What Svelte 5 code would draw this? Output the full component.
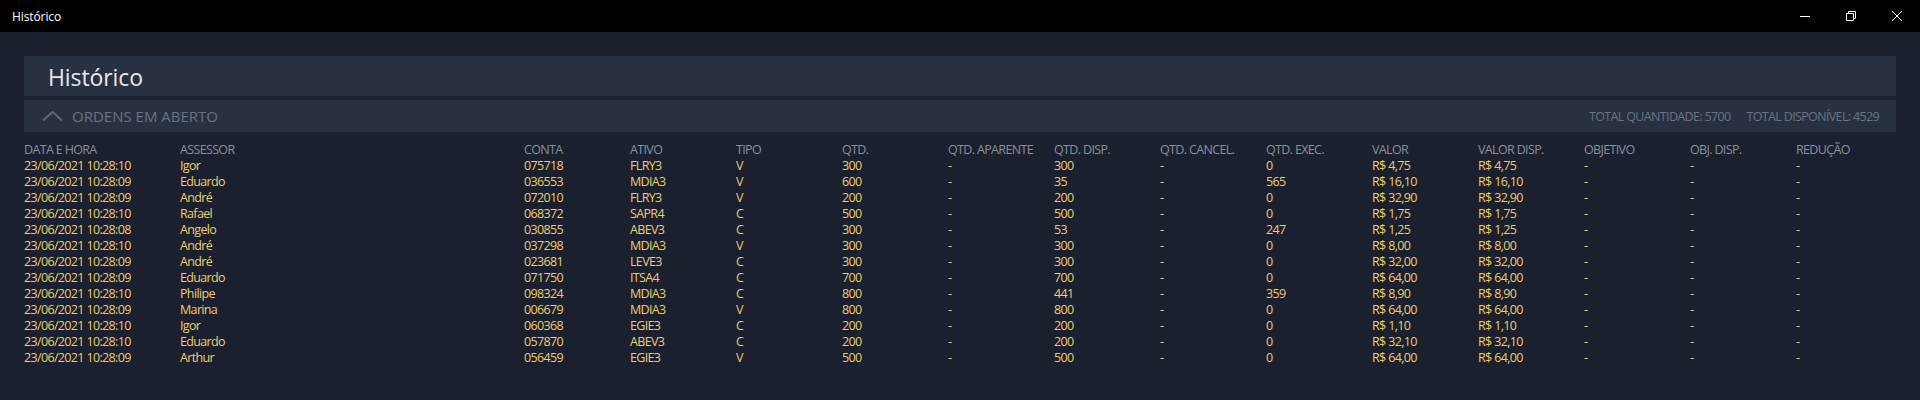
<script>
	const columns = ['DATA E HORA', 'ASSESSOR', 'CONTA', 'ATIVO', 'TIPO', 'QTD.', 'QTD. APARENTE', 'QTD. DISP.', 'QTD. CANCEL.', 'QTD. EXEC.', 'VALOR', 'VALOR DISP.', 'OBJETIVO', 'OBJ. DISP.', 'REDUÇÃO'];

	const orders = [
		['10', 'Igor', '075718', 'FLRY3', 'V', '300', '300', '0', '4,75'],
		['09', 'Eduardo', '036553', 'MDIA3', 'V', '600', '35', '565', '16,10'],
		['09', 'André', '072010', 'FLRY3', 'V', '200', '200', '0', '32,90'],
		['10', 'Rafael', '068372', 'SAPR4', 'C', '500', '500', '0', '1,75'],
		['08', 'Angelo', '030855', 'ABEV3', 'C', '300', '53', '247', '1,25'],
		['10', 'André', '037298', 'MDIA3', 'V', '300', '300', '0', '8,00'],
		['09', 'André', '023681', 'LEVE3', 'C', '300', '300', '0', '32,00'],
		['09', 'Eduardo', '071750', 'ITSA4', 'C', '700', '700', '0', '64,00'],
		['10', 'Philipe', '098324', 'MDIA3', 'C', '800', '441', '359', '8,90'],
		['09', 'Marina', '006679', 'MDIA3', 'V', '800', '800', '0', '64,00'],
		['10', 'Igor', '060368', 'EGIE3', 'C', '200', '200', '0', '1,10'],
		['10', 'Eduardo', '057870', 'ABEV3', 'C', '200', '200', '0', '32,10'],
		['09', 'Arthur', '056459', 'EGIE3', 'V', '500', '500', '0', '64,00']
	];

	function cells(o) {
		const price = 'R$ ' + o[8];
		return ['23/06/2021 10:28:' + o[0], o[1], o[2], o[3], o[4], o[5], '-', o[6], '-', o[7], price, price, '-', '-', '-'];
	}
</script>

<div class="window">
	<header class="titlebar">
		<span class="app_name">Histórico</span>
		<div class="controls">
			<svg width="46" height="32" viewBox="0 0 46 32"><path d="M18 16.5h10" stroke="#fff" fill="none" /></svg>
			<svg width="46" height="32" viewBox="0 0 46 32"><path d="M18.5 13.5h7v7h-7zM20.5 13.5v-2h7v7h-2" stroke="#fff" fill="none" /></svg>
			<svg width="46" height="32" viewBox="0 0 46 32"><path d="M18 11l10 10M28 11L18 21" stroke="#fff" fill="none" /></svg>
		</div>
	</header>

	<main>
		<h1 class="panel title">Histórico</h1>
		<section class="panel section">
			<svg class="chevron" width="20" height="12" viewBox="0 0 20 12"><path d="M1 10.5l9.5-8.5 9.5 8.5" stroke="#5e6777" stroke-width="2" fill="none" /></svg>
			<span class="section_name">ORDENS EM ABERTO</span>
			<span class="total">TOTAL QUANTIDADE: 5700</span>
			<span class="total">TOTAL DISPONÍVEL: 4529</span>
		</section>

		<div class="grid head">
			{#each columns as c}<span>{c}</span>{/each}
		</div>
		{#each orders as o}
			<div class="grid row">
				{#each cells(o) as c}<span>{c}</span>{/each}
			</div>
		{/each}
	</main>
</div>

<style>
	:global(body) {
		background: #1a202e;
	}

	.window {
		height: 400px;
		overflow: hidden;
		background: #1a202e;
		font-family: 'Open Sans', sans-serif;
	}

	.titlebar {
		display: flex;
		align-items: center;
		justify-content: space-between;
		height: 32px;
		background: #000;
		color: #fff;
		font-size: 12px;
		letter-spacing: -0.1px;
	}

	.app_name {
		margin-left: 12px;
	}

	.controls {
		display: flex;
	}

	main {
		padding: 24px 24px 0;
	}

	.panel {
		background: #283142;
		margin: 0 0 4px;
	}

	.title {
		height: 40px;
		padding-left: 24px;
		color: #e6e8ec;
		font-size: 23px;
		font-weight: 400;
		letter-spacing: -0.1px;
		line-height: 42px;
	}

	.section {
		display: flex;
		align-items: center;
		gap: 16px;
		height: 32px;
		padding: 0 17px 0 18px;
		color: #6a7383;
		font-size: 12.5px;
		letter-spacing: -0.65px;
		margin-bottom: 10px;
	}

	.chevron {
		margin-right: -6px;
	}

	.section_name {
		flex: 1;
		font-size: 15px;
		letter-spacing: 0;
	}

	.grid {
		display: grid;
		grid-template-columns: 156px 344px repeat(13, 106px);
		height: 16px;
		font-size: 12.5px;
		letter-spacing: -0.65px;
		line-height: 16px;
		white-space: nowrap;
	}

	.head {
		color: #8a909e;
	}

	.row {
		color: #f0cc6a;
	}
</style>
